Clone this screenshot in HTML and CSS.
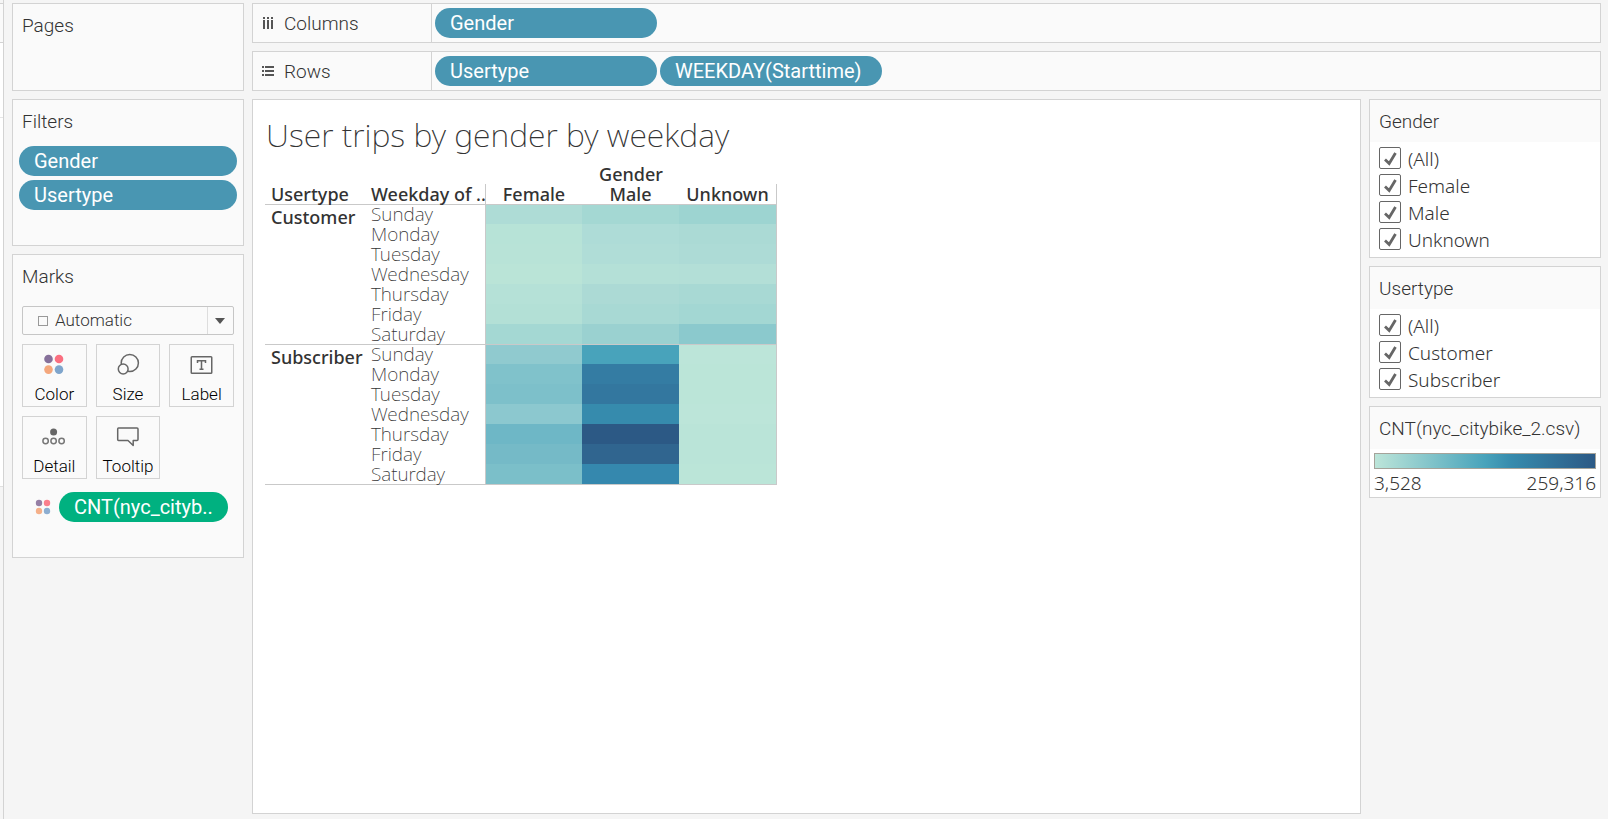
FILE: index.html
```html
<!DOCTYPE html>
<html lang="en">
<head>
<meta charset="utf-8">
<title>User trips by gender by weekday</title>
<link rel="stylesheet" href="styles.css">
</head>
<body>
<div class="app">
  <div class="rail"><div class="rail-head"></div><div class="rail-search"></div><div class="rail-fields"></div></div>

  <aside class="side">
    <section class="card pages"><h2 class="card-title">Pages</h2></section>
    <section class="card filters">
      <h2 class="card-title">Filters</h2>
      <div class="pill-stack">
        <button class="pill">Gender</button>
        <button class="pill">Usertype</button>
      </div>
    </section>
    <section class="card marks">
      <h2 class="card-title">Marks</h2>
      <select class="mark-type" aria-label="Mark type"><option>Automatic</option></select>
      <div class="mark-grid">
        <button class="mark">
          <svg width="24" height="24" viewBox="0 0 24 24"><circle cx="6.500" cy="7" r="4.300" fill="#86709a"/><circle cx="17" cy="7" r="4.300" fill="#fa6f80"/><circle cx="6.500" cy="17.600" r="4.300" fill="#f4a77c"/><circle cx="17" cy="17.600" r="4.300" fill="#7fa5cc"/></svg>
          <span>Color</span>
        </button>
        <button class="mark">
          <svg width="24" height="24" viewBox="0 0 24 24" fill="none" stroke="#666" stroke-width="1.500"><circle cx="13.800" cy="11" r="8.600"/><circle cx="7.200" cy="17" r="4.900" fill="#fafafa"/></svg>
          <span>Size</span>
        </button>
        <button class="mark">
          <svg width="24" height="24" viewBox="0 0 24 24" fill="none" stroke="#666" stroke-width="1.500"><rect x="1.250" y="4.750" width="20.500" height="16.500" rx=".8"/><path d="M7.500 11V8.700H15.500V11M11.500 8.700V17.300M9.500 17.300H13.500"/></svg>
          <span>Label</span>
        </button>
        <button class="mark">
          <svg width="24" height="24" viewBox="0 0 24 24" fill="none" stroke="#777" stroke-width="1.500"><circle cx="11.600" cy="8" r="3.500" fill="#666" stroke="none"/><circle cx="3.600" cy="17" r="2.700"/><circle cx="11.600" cy="17" r="2.700"/><circle cx="19.600" cy="17" r="2.700"/></svg>
          <span>Detail</span>
        </button>
        <button class="mark">
          <svg width="24" height="24" viewBox="0 0 24 24" fill="none" stroke="#666" stroke-width="1.500" stroke-linejoin="round"><path d="M2.500 4H21Q22 4 22 5V15.500Q22 16.500 21 16.500H17.200V21.500L12 16.500H2.500Q1.700 16.500 1.700 15.500V5Q1.700 4 2.500 4Z"/></svg>
          <span>Tooltip</span>
        </button>
      </div>
      <div class="encoding">
        <svg width="16" height="16" viewBox="0 0 16 16"><circle cx="4" cy="4" r="3.200" fill="#957fa5"/><circle cx="12" cy="4" r="3.200" fill="#fb7f8d"/><circle cx="4" cy="12" r="3.200" fill="#f5b089"/><circle cx="12" cy="12" r="3.200" fill="#8daed1"/></svg>
        <button class="pill measure">CNT(nyc_cityb..</button>
      </div>
    </section>
  </aside>

  <main class="main">
    <section class="card shelf">
      <div class="shelf-name">
        <svg width="14" height="14" viewBox="0 0 14 14" fill="#555"><path d="M2 1h2v2H2zM2 4h2v9H2zM6 1h2v2H6zM6 4h2v9H6zM10 1h2v2h-2zM10 4h2v9h-2z"/></svg>
        <h2>Columns</h2>
      </div>
      <div class="shelf-pills"><button class="pill">Gender</button></div>
    </section>
    <section class="card shelf">
      <div class="shelf-name">
        <svg width="14" height="14" viewBox="0 0 14 14" fill="#555"><path d="M1 2h2v2H1zM4 2h9v2H4zM1 6h2v2H1zM4 6h9v2H4zM1 10h2v2H1zM4 10h9v2H4z"/></svg>
        <h2>Rows</h2>
      </div>
      <div class="shelf-pills"><button class="pill">Usertype</button><button class="pill">WEEKDAY(Starttime)</button></div>
    </section>

    <div class="view">
      <section class="card sheet">
        <h1>User trips by gender by weekday</h1>
        <table class="heat">
          <colgroup><col class="c-user"><col class="c-day"><col class="c-cell"><col class="c-cell"><col class="c-last"></colgroup>
          <thead>
            <tr><td colspan="2"></td><th colspan="3">Gender</th></tr>
            <tr class="fields"><th class="user">Usertype</th><th class="day-field">Weekday of ..</th><th>Female</th><th>Male</th><th>Unknown</th></tr>
          </thead>
          <tbody>
            <tr><th class="user" rowspan="7">Customer</th><th class="day">Sunday</th><td style="background:#aedcd6"></td><td style="background:#a4d8d3"></td><td style="background:#9dd4d1"></td></tr>
            <tr><th class="day">Monday</th><td style="background:#b7e3d7"></td><td style="background:#aedcd7"></td><td style="background:#abdad5"></td></tr>
            <tr><th class="day">Tuesday</th><td style="background:#b8e3d7"></td><td style="background:#b0ddd7"></td><td style="background:#addbd6"></td></tr>
            <tr><th class="day">Wednesday</th><td style="background:#bae4d7"></td><td style="background:#b4e0d7"></td><td style="background:#b3dfd7"></td></tr>
            <tr><th class="day">Thursday</th><td style="background:#b5e1d7"></td><td style="background:#acdad5"></td><td style="background:#a8d9d4"></td></tr>
            <tr><th class="day">Friday</th><td style="background:#b3e0d6"></td><td style="background:#a8d9d4"></td><td style="background:#a3d7d3"></td></tr>
            <tr><th class="day">Saturday</th><td style="background:#a4d8d3"></td><td style="background:#9ad1d0"></td><td style="background:#8bc9cd"></td></tr>
          </tbody>
          <tbody>
            <tr><th class="user" rowspan="7">Subscriber</th><th class="day">Sunday</th><td style="background:#90cacf"></td><td style="background:#48a3bb"></td><td style="background:#bce5d9"></td></tr>
            <tr><th class="day">Monday</th><td style="background:#80c2cb"></td><td style="background:#347ca3"></td><td style="background:#bbe5d8"></td></tr>
            <tr><th class="day">Tuesday</th><td style="background:#7dc0ca"></td><td style="background:#33779f"></td><td style="background:#bbe5d8"></td></tr>
            <tr><th class="day">Wednesday</th><td style="background:#8cc8cf"></td><td style="background:#368bad"></td><td style="background:#bce5d9"></td></tr>
            <tr><th class="day">Thursday</th><td style="background:#6eb7c6"></td><td style="background:#2c5985"></td><td style="background:#bae4d8"></td></tr>
            <tr><th class="day">Friday</th><td style="background:#75bac7"></td><td style="background:#30658f"></td><td style="background:#bae4d8"></td></tr>
            <tr><th class="day">Saturday</th><td style="background:#7bbfc9"></td><td style="background:#3588ae"></td><td style="background:#bbe5d8"></td></tr>
          </tbody>
        </table>
      </section>

      <aside class="legends">
        <section class="card quick">
          <h2 class="card-title">Gender</h2>
          <div class="options">
            <label><input type="checkbox" checked><span>(All)</span></label>
            <label><input type="checkbox" checked><span>Female</span></label>
            <label><input type="checkbox" checked><span>Male</span></label>
            <label><input type="checkbox" checked><span>Unknown</span></label>
          </div>
        </section>
        <section class="card quick">
          <h2 class="card-title">Usertype</h2>
          <div class="options">
            <label><input type="checkbox" checked><span>(All)</span></label>
            <label><input type="checkbox" checked><span>Customer</span></label>
            <label><input type="checkbox" checked><span>Subscriber</span></label>
          </div>
        </section>
        <section class="card quick">
          <h2 class="card-title">CNT(nyc_citybike_2.csv)</h2>
          <div class="ramp-box">
            <div class="ramp"></div>
            <div class="ramp-ends"><span>3,528</span><span>259,316</span></div>
          </div>
        </section>
      </aside>
    </div>
  </main>
</div>
</body>
</html>
```
FILE: styles.css
```css
* { box-sizing: border-box; }
body { margin: 0; background: #f5f5f5; color: #333; font: 300 19px/24px Roboto, "Liberation Sans", sans-serif; }
h1, h2 { margin: 0; font-weight: 300; }
button, select, input { margin: 0; font: inherit; color: inherit; }
svg { display: block; flex: none; }

.app { display: flex; min-height: 100vh; }
.rail { width: 4px; flex: none; border-right: 1px solid #d3d3d3; padding-top: 3px; }
.rail-head { height: 40px; background: #fafafa; border: solid #d3d3d3; border-width: 1px 0; }
.rail-search { height: 75px; background: #fff; border-bottom: 1px solid #e6e6e6; }
.rail-fields { height: 369px; background: #fff; border-bottom: 1px solid #e0e0e0; }

.side, .legends { width: 232px; flex: none; display: flex; flex-direction: column; gap: 8px; }
.side { margin: 3px 8px 5px; }
.main { flex: 1; min-width: 0; display: flex; flex-direction: column; gap: 8px; padding: 3px 7px 5px 0; }
.card { background: #fafafa; border: 1px solid #d3d3d3; }
.card-title { font-size: 19px; line-height: 24px; padding: 10px 9px 8px; }

.pages { min-height: 88px; }
.filters { padding-bottom: 35px; }
.pill-stack { display: flex; flex-direction: column; gap: 4px; padding: 4px 6px 0; }
.pill { height: 30px; border: 0; border-radius: 15px; padding: 0 15px; background: #4996b2; color: #fff; font-size: 20px; font-weight: 400; text-align: left; white-space: nowrap; }

.marks { padding-bottom: 35px; }
.mark-type {
  display: block; width: calc(100% - 18px); height: 29px; margin: 9px 9px 0; padding: 0 30px 2px 32px;
  appearance: none; border: 1px solid #c6c6c6; border-radius: 2px; font-size: 17px;
  background:
    url("data:image/svg+xml,%3Csvg xmlns='http://www.w3.org/2000/svg' width='10' height='10'%3E%3Crect x='.5' y='.5' width='9' height='9' fill='none' stroke='%23999'/%3E%3C/svg%3E") 15px 50% no-repeat,
    url("data:image/svg+xml,%3Csvg xmlns='http://www.w3.org/2000/svg' width='26' height='27'%3E%3Cpath d='M.5 0V27' stroke='%23ddd'/%3E%3Cpath d='M8 11H18L13 17Z' fill='%23555'/%3E%3C/svg%3E") right 0 top 0 no-repeat,
    #fafafa;
}
.mark-grid { display: grid; grid-template-columns: repeat(3, 1fr); gap: 9px; padding: 9px 9px 0; }
.mark { display: flex; flex-direction: column; align-items: center; gap: 6px; height: 63px; padding: 7px 0 0; border: 1px solid #d3d3d3; background: #fafafa; color: #000; font-size: 17px; font-weight: 300; line-height: 24px; }
.encoding { display: flex; align-items: center; gap: 8px; padding: 13px 15px 0 22px; }
.measure { flex: 1; background: #00b180; }

.shelf { display: flex; height: 40px; }
.shelf-name { width: 179px; display: flex; align-items: center; gap: 9px; padding-left: 8px; border-right: 1px solid #d3d3d3; }
.shelf-name h2 { font-size: 19px; padding-top: 1px; }
.shelf-pills { display: flex; align-items: center; gap: 3px; padding-left: 3px; }
.shelf-pills .pill { width: 222px; }

.view { flex: 1; display: flex; gap: 8px; }
.sheet { flex: 1; min-width: 0; background: #fff; padding: 15px 12px; }
.sheet h1 { font: 200 32px/40px "Noto Sans", sans-serif; padding-left: 1px; }

.heat { table-layout: fixed; width: 512px; margin-top: 9px; border-spacing: 0; border-bottom: 1px solid #c9c9c9; font: 500 18px/19px "Noto Sans", sans-serif; }
.c-user { width: 106px; }
.c-day { width: 114px; }
.c-cell { width: 97px; }
.c-last { width: 98px; }
.heat th, .heat td { height: 20px; padding: 0; white-space: nowrap; }
.heat th { font-weight: 500; }
.heat .user { padding-left: 6px; text-align: left; vertical-align: top; }
.heat .fields .user { vertical-align: middle; }
.heat .day-field { text-align: left; }
.heat tbody .user { padding-top: 3px; }
.heat .day { text-align: left; font-size: 19px; font-weight: 200; color: #333; }
.heat tbody tr:first-child > * { border-top: 1px solid #c9c9c9; }
.heat .fields th:nth-child(3), .heat tbody .day + td { border-left: 1px solid #c9c9c9; }
.heat .fields th:last-child, .heat tbody td:last-child { border-right: 1px solid #c9c9c9; }

.options { background: #fff; padding: 5px 9px 7px; display: grid; gap: 5px; }
.options label { display: flex; align-items: center; gap: 7px; height: 22px; }
.options span, .ramp-ends { font: 300 19px/22px "Noto Sans", sans-serif; }
.options span { padding-top: 1px; }
.options input {
  appearance: none; width: 22px; height: 22px; flex: none; border: 1px solid #666; border-radius: 2px;
  background: #fff url("data:image/svg+xml,%3Csvg xmlns='http://www.w3.org/2000/svg' width='20' height='20'%3E%3Cpath d='M5 11.500L9.200 15.500L15.500 5' fill='none' stroke='%23666' stroke-width='2.800'/%3E%3C/svg%3E") center no-repeat;
}
.ramp-box { background: #fff; padding: 4px 4px 3px; }
.ramp { height: 16px; border: 1px solid #a5a39a; background: linear-gradient(90deg, #bce5d9, #48a3bb 50%, #368bad 62%, #2c5985); }
.ramp-ends { display: flex; justify-content: space-between; padding-top: 3px; }
```
